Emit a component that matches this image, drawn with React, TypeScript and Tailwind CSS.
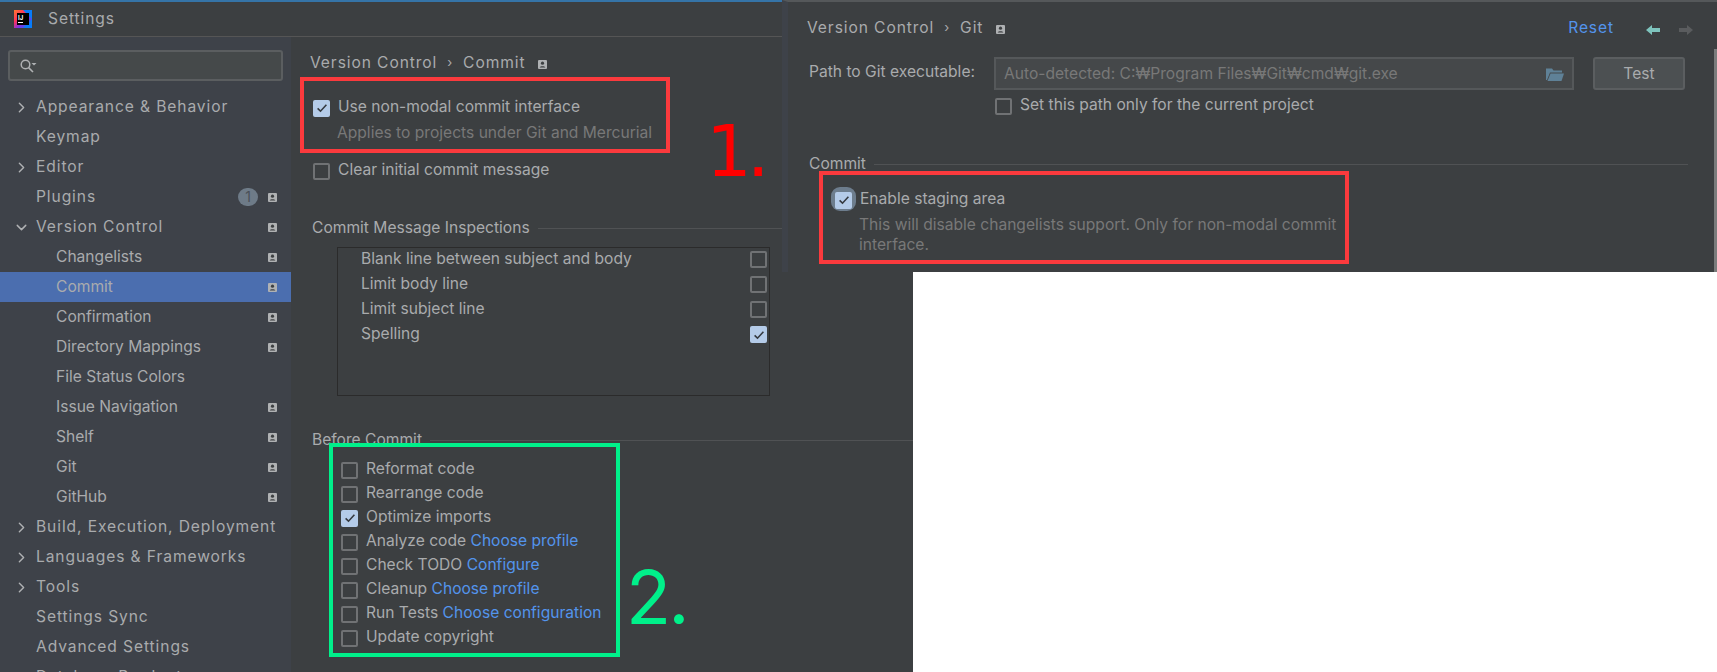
import { ChevronRight, ChevronDown } from "lucide-react";

const FONT = "font-['Inter','Noto_Sans',sans-serif]";

const Badge = () => (
  <svg width="9" height="9" viewBox="0 0 9 9" className="shrink-0">
    <rect width="9" height="9" rx="1" fill="#afb1b3" />
    <circle cx="4.5" cy="3.2" r="1.6" fill="#3c3f41" />
    <path d="M1.7 7.4c.3-1.6 5.300-1.600 5.600 0z" fill="#3c3f41" />
  </svg>
);

const Checkbox = ({ checked }: { checked?: boolean }) =>
  checked ? (
    <span className="w-[17px] h-[17px] mt-[2px] shrink-0 rounded-[2px] bg-[#b4cbe8] flex items-center justify-center">
      <svg width="12" height="12" viewBox="0 0 12 12">
        <path d="M1.6 6.4 4.5 9.2 10.4 2.8" fill="none" stroke="#353a40" strokeWidth="1.6" />
      </svg>
    </span>
  ) : (
    <span className="w-[17px] h-[17px] mt-[2px] shrink-0 rounded-[2px] border-2 border-[#707274]" />
  );

interface NavItem {
  label: string;
  arrow?: "right" | "down";
  child?: boolean;
  badge?: boolean;
  count?: boolean;
  selected?: boolean;
}

const navItems: NavItem[] = [
  { label: "Appearance & Behavior", arrow: "right" },
  { label: "Keymap" },
  { label: "Editor", arrow: "right" },
  { label: "Plugins", badge: true, count: true },
  { label: "Version Control", arrow: "down", badge: true },
  { label: "Changelists", child: true, badge: true },
  { label: "Commit", child: true, badge: true, selected: true },
  { label: "Confirmation", child: true, badge: true },
  { label: "Directory Mappings", child: true, badge: true },
  { label: "File Status Colors", child: true },
  { label: "Issue Navigation", child: true, badge: true },
  { label: "Shelf", child: true, badge: true },
  { label: "Git", child: true, badge: true },
  { label: "GitHub", child: true, badge: true },
  { label: "Build, Execution, Deployment", arrow: "right" },
  { label: "Languages & Frameworks", arrow: "right" },
  { label: "Tools", arrow: "right" },
  { label: "Settings Sync" },
  { label: "Advanced Settings" },
  { label: "Database Products" },
];

const Sidebar = () => (
  <aside className="w-[291px] shrink-0 bg-[#3e4249] overflow-hidden">
    <div className="mx-[8px] mt-[13px] h-[31px] rounded-[3px] border-2 border-[#5b5e60] bg-[#45494a] flex items-center pl-[9px]">
      <svg width="18" height="16" viewBox="0 0 18 16">
        <circle cx="6.500" cy="6.500" r="4.300" fill="none" stroke="#afb1b3" strokeWidth="1.500" />
        <path d="M9.600 9.600 14 14" stroke="#afb1b3" strokeWidth="1.600" />
        <path d="M12.500 5h5l-2.500 2.600z" fill="#afb1b3" />
      </svg>
    </div>
    <nav className="mt-[11px]">
      {navItems.map((item) => (
        <div
          key={item.label}
          className={`h-[30px] flex items-center pr-[14px] ${item.selected ? "bg-[#4b6eaf]" : ""} ${item.child ? "pl-[56px] tracking-normal" : "pl-[36px] tracking-[0.9px]"}`}
        >
          <span className="relative flex-1 whitespace-nowrap">
            {item.arrow === "right" && <ChevronRight size={17} strokeWidth={2} className="absolute left-[-23px] top-[4px] text-[#afb1b3]" />}
            {item.arrow === "down" && <ChevronDown size={17} strokeWidth={2} className="absolute left-[-23px] top-[4px] text-[#afb1b3]" />}
            {item.label}
          </span>
          {item.count && (
            <span className="w-[20px] h-[18px] mr-[10px] rounded-full bg-[#6e7b88] text-[#4a5057] text-[14px] leading-[18px] text-center tracking-normal">1</span>
          )}
          {item.badge && <Badge />}
        </div>
      ))}
    </nav>
  </aside>
);

const InspectionRow = ({ label, checked }: { label: string; checked?: boolean }) => (
  <div className="h-[25px] flex items-center justify-between pl-[23px] pr-[2px]">
    <span>{label}</span>
    <Checkbox checked={checked} />
  </div>
);

const BeforeRow = ({ label, checked, link }: { label: string; checked?: boolean; link?: string }) => (
  <div className="h-[24px] flex items-center gap-[8px]">
    <Checkbox checked={checked} />
    <span className="whitespace-nowrap">
      {label} {link && <span className="text-[#5394ec]">{link}</span>}
    </span>
  </div>
);

const CommitPanel = () => (
  <main className="flex-1 pl-[19px] relative bg-[#3c3f41]">
    <div className="pt-[13px] h-[38px] tracking-[0.9px] flex items-center">
      <span>Version Control</span>
      <span className="mx-[10px] text-[13px]">›</span>
      <span>Commit</span>
      <span className="ml-[13px] mt-[3px]"><Badge /></span>
    </div>

    <div className="w-[476px]">
      <div className="mt-[20px] pl-[3px] h-[24px] flex items-center gap-[8px]">
        <Checkbox checked />
        <span>Use non-modal commit interface</span>
      </div>
      <div className="pl-[27px] h-[28px] flex items-center text-[#787878]">Applies to projects under Git and Mercurial</div>
      <div className="mt-[11px] pl-[3px] h-[24px] flex items-center gap-[8px]">
        <Checkbox />
        <span>Clear initial commit message</span>
      </div>

      <div className="mt-[34px] pl-[2px] flex items-center gap-[8px] h-[24px]">
        <span className="whitespace-nowrap">Commit Message Inspections</span>
        <span className="flex-1 h-px bg-[#505254]" />
      </div>
      <div className="mt-[7px] ml-[27px] w-[433px] h-[149px] border border-[#2b2b2b]">
        <div className="-mt-[2px]">
          <InspectionRow label="Blank line between subject and body" />
          <InspectionRow label="Limit body line" />
          <InspectionRow label="Limit subject line" />
          <InspectionRow label="Spelling" checked />
        </div>
      </div>
    </div>

    <div className="mt-[32px] pl-[2px] flex items-center gap-[8px] h-[24px]">
      <span className="whitespace-nowrap">Before Commit</span>
      <span className="flex-1 h-px bg-[#505254]" />
    </div>
    <div className="mt-[5px] pl-[31px]">
      <BeforeRow label="Reformat code" />
      <BeforeRow label="Rearrange code" />
      <BeforeRow label="Optimize imports" checked />
      <BeforeRow label="Analyze code" link="Choose profile" />
      <BeforeRow label="Check TODO" link="Configure" />
      <BeforeRow label="Cleanup" link="Choose profile" />
      <BeforeRow label="Run Tests" link="Choose configuration" />
      <BeforeRow label="Update copyright" />
    </div>
  </main>
);

const GitPanel = () => (
  <section className="absolute left-[782px] top-0 w-[935px] h-[272px] bg-[#3c3f41] border-t-2 border-t-[#55585a] border-l-[6px] border-l-[#3e4249] pl-[19px] pr-[29px]">
    <div className="h-[53px] pb-[2px] -mr-[5px] flex items-center tracking-[0.9px]">
      <span>Version Control</span>
      <span className="mx-[10px] text-[13px]">›</span>
      <span>Git</span>
      <span className="ml-[13px] mt-[3px]"><Badge /></span>
      <span className="ml-auto text-[#5394ec]">Reset</span>
      <svg width="14" height="12" viewBox="0 0 14 12" className="ml-[32px] mt-[5px]">
        <path d="M0 6 6 1v3h8v4H6v3z" fill="#7ec4bd" />
      </svg>
      <svg width="14" height="12" viewBox="0 0 14 12" className="ml-[19px] mt-[5px]">
        <path d="M14 6 8 1v3H0v4h8v3z" fill="#5a5c5e" />
      </svg>
    </div>
    <div className="flex items-center h-[33px] mt-[2px]">
      <span className="w-[187px] shrink-0 pl-[2px] -mt-[3px] whitespace-nowrap">Path to Git executable:</span>
      <div className="w-[580px] h-full border-2 border-[#55585a] bg-[#45484a] flex items-center justify-between px-[8px] text-[#787878]">
        <span>Auto-detected: C:₩Program Files₩Git₩cmd₩git.exe</span>
        <svg width="18" height="14" viewBox="0 0 18 14">
          <path d="M0 1.500h6l1.500 2H16v2H4L1 13H0z" fill="#5f8197" />
          <path d="M4.500 6.500H18L15.500 14H1.500z" fill="#5f8197" />
        </svg>
      </div>
      <div className="ml-[19px] w-[92px] h-full rounded-[3px] border-2 border-[#5b5e60] bg-[#4c5052] flex items-center justify-center">Test</div>
    </div>
    <div className="mt-[3px] ml-[188px] h-[24px] flex items-center gap-[8px]">
      <Checkbox />
      <span>Set this path only for the current project</span>
    </div>
    <div className="mt-[35px] flex items-center gap-[8px] h-[24px] pl-[2px]">
      <span>Commit</span>
      <span className="flex-1 h-px bg-[#505254]" />
    </div>
    <div className="mt-[11px] pl-[24px] h-[24px] flex items-center gap-[4px]">
      <span className="w-[25px] h-[24px] rounded-[9px] bg-[#6d7d8d] flex items-center justify-center">
        <Checkbox checked />
      </span>
      <span>Enable staging area</span>
    </div>
    <div className="pl-[52px] mt-[4px] w-[560px] text-[#787878] leading-[20px]">
      This will disable changelists support. Only for non-modal commit interface.
    </div>
    {/* scrollbar thumb */}
    <span className="absolute right-0 top-[47px] w-[3px] h-[223px] bg-[#7a7c7c]" />
  </section>
);

export default function App() {
  return (
    <div className={`relative w-[1717px] h-[672px] overflow-hidden bg-white text-[15.6px] text-[#a9abad] ${FONT}`}>
      <div className="w-[913px] h-full flex flex-col bg-[#3c3f41]">
        <header className="h-[37px] shrink-0 border-t-2 border-[#3574a8] border-b border-b-[#555555] bg-[#3c3f41] flex items-center pl-[14px]">
          <svg width="18" height="18" viewBox="0 0 18 18">
            <defs>
              <linearGradient id="ijEdge" x1="0" y1="0" x2="1" y2="1">
                <stop offset="0" stopColor="#fe7a2d" />
                <stop offset="0.35" stopColor="#fe315d" />
                <stop offset="0.6" stopColor="#7b33e5" />
                <stop offset="1" stopColor="#087cfa" />
              </linearGradient>
            </defs>
            <rect width="18" height="18" fill="url(#ijEdge)" />
            <path d="M9 0h9v18H9l9-9z" fill="#087cfa" />
            <rect x="3" y="3" width="12" height="12" fill="#000" />
            <text x="4" y="9.500" fontSize="6" fontWeight="700" fill="#fff" fontFamily="Inter">IJ</text>
            <rect x="4" y="12" width="5" height="1" fill="#fff" />
          </svg>
          <span className="ml-[16px] tracking-[0.9px]">Settings</span>
        </header>
        <div className="flex-1 flex min-h-0">
          <Sidebar />
          <CommitPanel />
        </div>
      </div>

      <GitPanel />

      {/* annotations drawn over the screenshot */}
      <div className="absolute left-[300px] top-[77px] w-[370px] h-[76px] border-[4px] border-[#fb3a3d]" />
      <div className="absolute left-[819px] top-[171px] w-[530px] h-[93px] border-[4px] border-[#fb3a3d]" />
      <div className="absolute left-[329px] top-[443px] w-[291px] h-[214px] border-[4px] border-[#00f08a]" />
      <span className="absolute left-[706px] top-[106px] text-[#ff0000] text-[72px] leading-[90px] tracking-[-5px] font-['DejaVu_Sans']">1.</span>
      <span className="absolute left-[626px] top-[552px] text-[#00f08a] text-[74px] leading-[90px] tracking-[-3px] font-['Inter']">2.</span>
    </div>
  );
}
